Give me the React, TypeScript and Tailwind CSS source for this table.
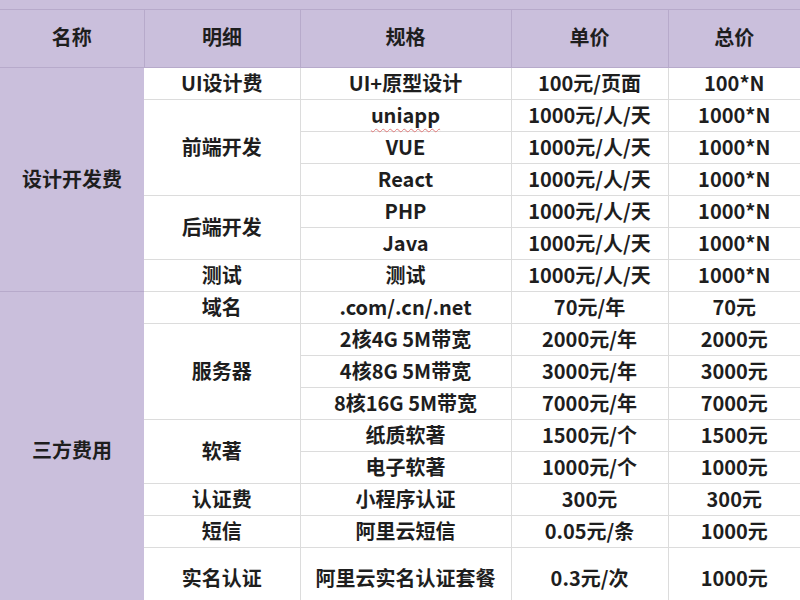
import React from "react"

type Row = {
  group?: { label: string; span: number }
  item?: { label: string; span: number }
  spec: string
  unit: string
  total: string
  tall?: boolean
  spell?: boolean
}

const rows: Row[] = [
  { group: { label: "设计开发费", span: 7 }, item: { label: "UI设计费", span: 1 }, spec: "UI+原型设计", unit: "100元/页面", total: "100*N" },
  { item: { label: "前端开发", span: 3 }, spec: "uniapp", unit: "1000元/人/天", total: "1000*N", spell: true },
  { spec: "VUE", unit: "1000元/人/天", total: "1000*N" },
  { spec: "React", unit: "1000元/人/天", total: "1000*N" },
  { item: { label: "后端开发", span: 2 }, spec: "PHP", unit: "1000元/人/天", total: "1000*N" },
  { spec: "Java", unit: "1000元/人/天", total: "1000*N" },
  { item: { label: "测试", span: 1 }, spec: "测试", unit: "1000元/人/天", total: "1000*N" },
  { group: { label: "三方费用", span: 10 }, item: { label: "域名", span: 1 }, spec: ".com/.cn/.net", unit: "70元/年", total: "70元" },
  { item: { label: "服务器", span: 3 }, spec: "2核4G 5M带宽", unit: "2000元/年", total: "2000元" },
  { spec: "4核8G 5M带宽", unit: "3000元/年", total: "3000元" },
  { spec: "8核16G 5M带宽", unit: "7000元/年", total: "7000元" },
  { item: { label: "软著", span: 2 }, spec: "纸质软著", unit: "1500元/个", total: "1500元" },
  { spec: "电子软著", unit: "1000元/个", total: "1000元" },
  { item: { label: "认证费", span: 1 }, spec: "小程序认证", unit: "300元", total: "300元" },
  { item: { label: "短信", span: 1 }, spec: "阿里云短信", unit: "0.05元/条", total: "1000元" },
  { item: { label: "实名认证", span: 1 }, spec: "阿里云实名认证套餐", unit: "0.3元/次", total: "1000元", tall: true },
]

const cell = "border border-[#dcdcdc] text-center align-middle p-0"
const purple = "border border-[#b7aacb] bg-[#cabfdc] text-center align-middle p-0"

export default function App() {
  return (
    <div className="h-[600px] w-[800px] overflow-hidden bg-white text-[20px] leading-[26px] font-semibold text-[#1e1e1e] [font-family:'Noto_Sans_CJK_SC','Noto_Sans',sans-serif]">
      <div className="h-[10px] border-b border-[#b7aacb] bg-[#cabfdc]" />
      <table className="w-[800px] table-fixed border-collapse">
        <colgroup>
          <col className="w-[144px]" />
          <col className="w-[156px]" />
          <col className="w-[211px]" />
          <col className="w-[157px]" />
          <col className="w-[132px]" />
        </colgroup>
        <thead>
          <tr className="h-[57px]">
            <th className={`${purple} border-t-0 border-l-0 pb-[3px] font-semibold`}>名称</th>
            <th className={`${purple} border-t-0 pb-[3px] font-semibold`}>明细</th>
            <th className={`${purple} border-t-0 pb-[3px] font-semibold`}>规格</th>
            <th className={`${purple} border-t-0 pb-[3px] font-semibold`}>单价</th>
            <th className={`${purple} border-t-0 border-r-0 pb-[3px] font-semibold`}>总价</th>
          </tr>
        </thead>
        <tbody>
          {rows.map((r, i) => (
            <tr key={i} className={r.tall ? "h-[62px]" : "h-[32px]"}>
              {r.group && (
                <td rowSpan={r.group.span} className={`${purple} border-l-0 border-r-0`}>
                  {r.group.label}
                </td>
              )}
              {r.item && (
                <td rowSpan={r.item.span} className={`${cell} border-l-0`}>
                  {r.item.label}
                </td>
              )}
              <td className={cell}>
                {r.spell ? (
                  <span className="underline decoration-wavy decoration-[#e07a7a] decoration-1 underline-offset-[5px]">{r.spec}</span>
                ) : (
                  r.spec
                )}
              </td>
              <td className={cell}>{r.unit}</td>
              <td className={`${cell} border-r-0`}>{r.total}</td>
            </tr>
          ))}
        </tbody>
      </table>
    </div>
  )
}
